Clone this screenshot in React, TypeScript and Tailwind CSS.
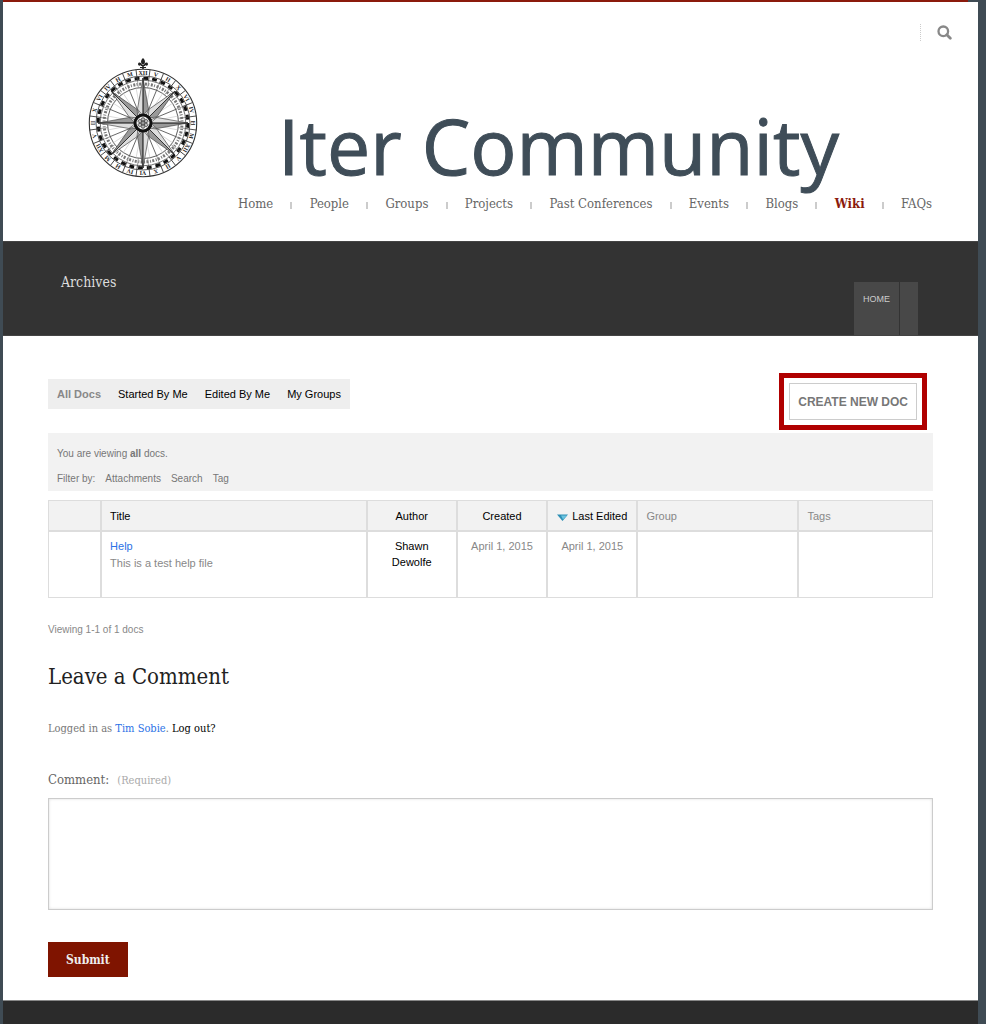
import React from "react";

const slab = "font-['Roboto_Slab','DejaVu_Serif_Condensed','DejaVu_Serif',serif]";

const navItems = [
  "Home",
  "People",
  "Groups",
  "Projects",
  "Past Conferences",
  "Events",
  "Blogs",
  "Wiki",
  "FAQs",
];

function range(n: number) {
  return Array.from({ length: n }, (_, i) => i);
}

function Compass() {
  const numerals = ["XII", "V", "II", "X", "VI", "IV", "H", "M"];
  return (
    <svg viewBox="-55 -65 110 120" className="h-[120px] w-[110px] shrink-0" role="img" aria-label="Compass rose">
      <g fill="none" stroke="#333">
        <circle r="53.7" strokeWidth="1.1" />
        <circle r="47" strokeWidth="0.8" />
        <circle r="44.8" strokeWidth="3" strokeDasharray="4.8 4" stroke="#111" />
        <circle r="42.8" strokeWidth="0.7" />
        <circle r="39" strokeWidth="3" strokeDasharray="1 1.6 2 1.3" stroke="#777" />
        <circle r="35.5" strokeWidth="0.8" />
      </g>
      {range(24).map((i) => (
        <g key={i} transform={`rotate(${i * 15 + 7.5})`}>
          <path d="M0-54V-42.5" stroke="#444" strokeWidth="0.9" />
          <path d="M0-42.5V-35.5" stroke="#777" strokeWidth="0.6" />
        </g>
      ))}
      {range(24).map((i) => (
        <text
          key={i}
          transform={`rotate(${i * 15})`}
          y="-48.2"
          textAnchor="middle"
          fill="#222"
          className="font-['Liberation_Serif',serif] text-[6px] font-bold"
        >
          {numerals[i % 8]}
        </text>
      ))}
      {range(8).map((i) => (
        <path key={i} d="M0-36V-8" transform={`rotate(${i * 45 + 22.5})`} stroke="#555" strokeWidth="0.8" />
      ))}
      {range(16).map((i) => (
        <path key={i} d="M0-10V-36" transform={`rotate(${i * 22.5 + 11.25})`} stroke="#aaa" strokeWidth="0.4" />
      ))}
      {[45, 135, 225, 315, 0, 90, 180, 270].map((a) => (
        <g key={a} transform={`rotate(${a})`} stroke="#333" strokeWidth="0.6">
          <path d="M0-45L5.5-14L0-7Z" fill="#999" />
          <path d="M0-45L-5.5-14L0-7Z" fill="#ddd" />
          <path d="M0-45V-8" strokeWidth="0.9" />
        </g>
      ))}
      <circle r="8" fill="#eee" stroke="#111" strokeWidth="3" />
      {range(6).map((i) => (
        <circle key={i} cy="-3.6" r="1.7" transform={`rotate(${i * 60})`} fill="#bbb" stroke="#333" strokeWidth="0.7" />
      ))}
      <circle r="1.9" fill="#999" stroke="#333" strokeWidth="0.7" />
      <g fill="#222">
        <path d="M0-65C-3-62-2-60-.8-58.5H.8C2-60 3-62 0-65Z" />
        <path d="M-.8-58C-2-61.5-5-61-5-59C-5-57-3-57-2.5-58C-2.5-57-1.5-57-.8-57V-54H.8V-57C1.5-57 2.5-57 2.5-58C3-57 5-57 5-59C5-61 2-61.5.8-58Z" />
        <path d="M-3-56H3V-55H-3Z" />
      </g>
    </svg>
  );
}

function Header() {
  return (
    <header className="bg-white pb-[26px]">
      <div className="flex h-[56px] items-center justify-end gap-4 pt-1 pr-[26px]">
        <span className="h-[17px] border-l border-dotted border-[#ccc]" />
        <button type="button" aria-label="Search" className="text-[#888]">
          <svg viewBox="0 0 15 15" className="size-[15px]" fill="none" stroke="currentColor">
            <circle cx="6.3" cy="6.3" r="4.8" strokeWidth="2.3" />
            <path d="M9.8 9.8L13.3 13.3" strokeWidth="2.8" strokeLinecap="round" />
          </svg>
        </button>
      </div>
      <div className="flex h-[125px] items-start gap-20 pl-[85px]">
        <Compass />
        <h1 className="mt-[50px] font-['Open_Sans','Noto_Sans',sans-serif] text-[77px] leading-[76px] font-medium whitespace-nowrap text-[#3f4d58] [-webkit-text-stroke:1px_#3f4d58]">
          Iter Community
        </h1>
      </div>
      <nav aria-label="Main" className="mt-[10px] pr-[46px] pl-[235px]">
        <ul className={`flex items-center justify-between text-[13px] leading-[22px] text-[#666] ${slab}`}>
          {navItems.map((item, i) => (
            <React.Fragment key={item}>
              {i > 0 && <li aria-hidden="true" className="mt-0.5 h-[7px] w-0.5 bg-[#ccc]" />}
              <li>
                <a href="#" className={item === "Wiki" ? "font-bold text-[#8b1a0c]" : ""}>
                  {item}
                </a>
              </li>
            </React.Fragment>
          ))}
        </ul>
      </nav>
    </header>
  );
}

function Banner() {
  return (
    <div className="flex h-[95px] justify-between border-y border-[#444] bg-[#333] pr-[60px] pl-[58px]">
      <h2 className={`mt-[29px] text-[14px] leading-[22px] text-[#ddd] ${slab}`}>Archives</h2>
      <div className="mt-[40px] flex gap-px text-[9px] leading-[34px] text-[#ccc]">
        <a href="#" className="bg-[#484848] px-[9px]">
          HOME
        </a>
        <span className="w-[18px] bg-[#484848]" />
      </div>
    </div>
  );
}

function DocsTable() {
  const th = "border border-[#ddd] px-2 pt-[7px] pb-[6px] font-normal leading-4";
  const td = "border border-[#ddd] px-2 pt-[6px] align-top leading-4";
  return (
    <table className="mt-[9px] w-full table-fixed border-separate border-spacing-0 text-[11px]">
      <colgroup>
        <col className="w-[6%]" />
        <col className="w-[30%]" />
        <col className="w-[10.2%]" />
        <col className="w-[10.2%]" />
        <col className="w-[10.2%]" />
        <col className="w-[18.2%]" />
        <col className="w-[15.2%]" />
      </colgroup>
      <thead>
        <tr className="bg-[#f2f2f2] text-black">
          <th className={th} aria-label="Attachments" />
          <th className={`${th} text-left`}>
            <a href="#">Title</a>
          </th>
          <th className={th}>
            <a href="#">Author</a>
          </th>
          <th className={th}>
            <a href="#">Created</a>
          </th>
          <th className={`${th} whitespace-nowrap`}>
            <a href="#" className="flex items-center justify-center gap-1">
              <svg viewBox="0 0 11 7" className="mt-0.5 h-[7px] w-[11px] shrink-0">
                <path d="M0 .5H11L5.5 7Z" fill="#2d8fb5" />
                <path d="M4 1.5H10L6 5.5Z" fill="#6cc4e0" />
              </svg>
              Last Edited
            </a>
          </th>
          <th className={`${th} text-left text-[#888]`}>Group</th>
          <th className={`${th} text-left text-[#888]`}>Tags</th>
        </tr>
      </thead>
      <tbody>
        <tr className="h-[67px] text-[#888]">
          <td className={td} />
          <td className={td}>
            <a href="#" className="text-[#2b72e6]">
              Help
            </a>
            <p className="mt-px">This is a test help file</p>
          </td>
          <td className={`${td} text-center text-black`}>
            <a href="#">Shawn Dewolfe</a>
          </td>
          <td className={`${td} text-center`}>April 1, 2015</td>
          <td className={`${td} text-center`}>April 1, 2015</td>
          <td className={td} />
          <td className={td} />
        </tr>
      </tbody>
    </table>
  );
}

function CommentForm() {
  return (
    <form className={slab} onSubmit={(e) => e.preventDefault()}>
      <h2 className="mt-[22px] text-[22px] leading-8 text-[#222]">Leave a Comment</h2>
      <p className="mt-[26px] text-[11px] leading-5 text-[#777]">
        Logged in as{" "}
        <a href="#" className="text-[#2b72e6]">
          Tim Sobie
        </a>
        .{" "}
        <a href="#" className="text-black">
          Log out?
        </a>
      </p>
      <label htmlFor="comment" className="mt-[31px] flex items-baseline gap-2 text-[13px] leading-5 text-[#666]">
        Comment: <span className="text-[11px] text-[#aaa]">(Required)</span>
      </label>
      <textarea
        id="comment"
        className="mt-[7px] block h-[112px] w-full resize-none border border-[#ccc] p-2 text-[13px] shadow-[inset_0_0_3px_#ddd] outline-none"
      />
      <button type="submit" className="mt-8 block h-[35px] bg-[#7f1400] px-[18px] text-[12px] font-bold text-[#eee]">
        Submit
      </button>
    </form>
  );
}

export default function App() {
  return (
    <div className="min-h-screen bg-[#3f4b54] pr-2 pl-[3px] font-['Liberation_Sans',Arial,sans-serif]">
      <div className="mr-[10px] h-[2px] bg-[#8b1a0c]" />
      <Header />
      <Banner />
      <main className="bg-white px-[45px] pt-[37px] pb-[23px]">
        <div className="flex items-start justify-between">
          <nav aria-label="Docs" className="mt-[6px] flex gap-[17px] bg-[#eee] px-[9px] text-[11px] leading-[30px] text-black">
            <a href="#" className="font-bold text-[#888]">
              All Docs
            </a>
            <a href="#">Started By Me</a>
            <a href="#">Edited By Me</a>
            <a href="#">My Groups</a>
          </nav>
          <div className="mr-[6px] border-[5px] border-[#b00000] p-[5px]">
            <button type="button" className="block h-[37px] border border-[#ccc] px-2 text-[12px] font-bold text-[#777]">
              CREATE NEW DOC
            </button>
          </div>
        </div>
        <div className="mt-[3px] bg-[#f2f2f2] px-[9px] pt-[12px] pb-[3px] text-[10px] leading-[18px] text-[#777]">
          <p>
            You are viewing <strong>all</strong> docs.
          </p>
          <div className="mt-[7px] flex gap-[10px]">
            <span>Filter by:</span>
            <a href="#">Attachments</a>
            <a href="#">Search</a>
            <a href="#">Tag</a>
          </div>
        </div>
        <DocsTable />
        <p className="mt-[23px] text-[10px] leading-[18px] text-[#888]">Viewing 1-1 of 1 docs</p>
        <CommentForm />
      </main>
      <footer className="h-6 border-t border-[#888] bg-[#2b2b2b]" />
    </div>
  );
}
